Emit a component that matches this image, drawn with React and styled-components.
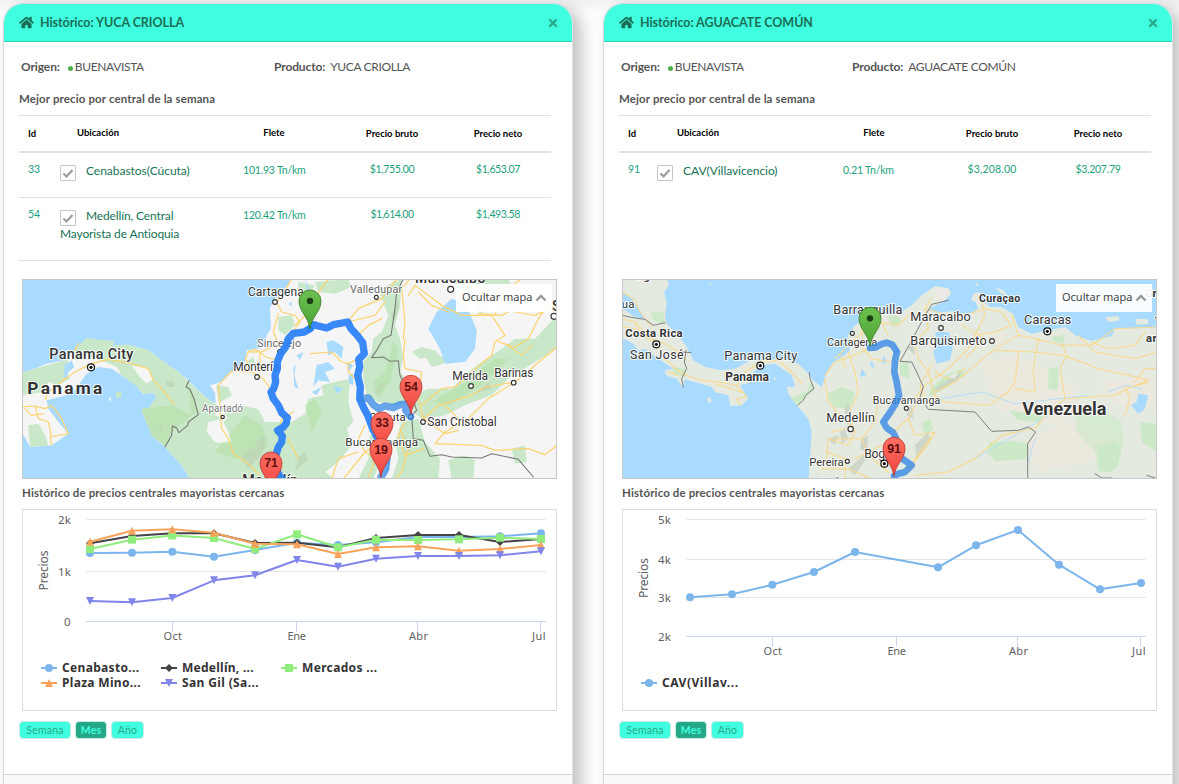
import React from "react";
import styled, { createGlobalStyle, css } from "styled-components";
import { FaHome, FaTimes } from "react-icons/fa";

const Global = createGlobalStyle`
  * { box-sizing: border-box; }
  html, body { margin: 0; height: 784px; overflow: hidden; background: #fdfdfd; }
  body { font-family: Lato, "Open Sans", sans-serif; color: #555; font-size: 12px; }
`;

const Board = styled.main`
  display: flex;
  gap: 30px;
  height: 784px;
  padding: 3px 0 0 3px;
  overflow: hidden;
  background: linear-gradient(#f0f0f0, #fdfdfd 12px);
`;

const Card = styled.section`
  flex: none;
  width: 570px;
  height: 820px;
  border: 1px solid #d8dadb;
  border-right-color: #e0e0e0;
  border-radius: 20px 20px 0 0;
  background: #fff;
  box-shadow: 8px 5px 16px rgba(0, 0, 0, 0.24);
`;

const CardHeader = styled.header`
  display: flex;
  align-items: center;
  height: 38px;
  padding: 0 13px 0 15px;
  border-bottom: 1px solid #33d6b5;
  border-radius: 19px 19px 0 0;
  background: #40ffe0;
  color: #1b6e55;
`;

const Title = styled.h1`
  flex: 1;
  margin: 0 0 0 6px;
  font-size: 12.5px;
  line-height: 18px;
  font-weight: 700;
  letter-spacing: -0.06px;
`;

const Close = styled.button`
  display: flex;
  padding: 0;
  border: 0;
  background: none;
  color: #2aa98b;
`;

const Body = styled.div`
  height: 732px;
  padding: 16px 15px 0;
`;

const InfoRow = styled.div`
  display: grid;
  grid-template-columns: ${(p) => p.$first}px 1fr;
  padding-left: 2px;
  line-height: 18px;
`;

const Info = styled.div`
  display: flex;
  align-items: center;
  letter-spacing: -0.35px;
  white-space: nowrap;
  b { margin-right: ${(p) => p.$gap}px; letter-spacing: -0.12px; }
`;

const Dot = styled.i`
  width: 5px;
  height: 5px;
  margin: 3px 2px 0 0;
  border-radius: 50%;
  background: #4cb04c;
`;

const Heading = styled.h2`
  margin: ${(p) => p.$m};
  font-size: 11.5px;
  line-height: 18px;
  font-weight: 700;
  letter-spacing: 0.12px;
`;

const Table = styled.div`
  width: 532px;
  height: 164px;
  border-top: 1px solid #dee2e6;
`;

const columns = css`
  display: grid;
  grid-template-columns: 41px 155px 118px 118px 94px;
`;

const HeadRow = styled.div`
  ${columns}
  height: 37px;
  line-height: 35px;
  border-bottom: 2px solid #dee2e6;
  color: #000;
  font-size: 9.5px;
  font-weight: 700;
`;

const Row = styled.div`
  ${columns}
  padding: 9px 0 17px;
  border-bottom: ${(p) => (p.$last ? "0" : "1px solid #dee2e6")};
  color: #1aa17e;
  font-size: 10.5px;
  line-height: 15px;
`;

const Cell = styled.div`
  padding-left: ${(p) => p.$pad || 0}px;
  text-align: ${(p) => (p.$center ? "center" : "left")};
  letter-spacing: ${(p) => p.$track || 0}px;
`;

const RaisedHead = styled(Cell)`
  line-height: 33px;
`;

const Freight = styled(Cell)`
  line-height: 17px;
`;

const Place = styled.div`
  margin-left: ${(p) => (p.$shift ? "-3px" : 0)};
  color: #157355;
  font-size: 12px;
  line-height: 18px;
  letter-spacing: ${(p) => p.$track}px;
`;

const Check = styled.span`
  display: inline-flex;
  width: 16px;
  height: 16px;
  margin: 3px 10px -1px 0;
  border: 1px solid #c6c6c6;
  border-radius: 1px;
  vertical-align: top;
  svg { display: block; }
`;

const MapFrame = styled.div`
  position: relative;
  width: 535px;
  height: 200px;
  margin-left: 3px;
  border: 1px solid #c8c8c8;
  overflow: hidden;
  svg.map { display: block; font-family: Roboto, sans-serif; }
`;

const HideMap = styled.button`
  position: absolute;
  top: 4px;
  right: 4px;
  display: flex;
  align-items: center;
  justify-content: space-between;
  width: 96px;
  height: 28px;
  padding: 0 5px 3px 6px;
  border: 0;
  background: rgba(255, 255, 255, 0.93);
  color: #444;
  font: 11px "Noto Sans", sans-serif;
  svg { margin-top: 3px; }
`;

const ChartFrame = styled.div`
  width: 535px;
  height: 202px;
  margin-left: 3px;
  border: 1px solid #dcdcdc;
  svg { display: block; font-family: "Noto Sans", "Open Sans", sans-serif; }
`;

const Buttons = styled.div`
  display: flex;
  gap: 4px;
  margin-top: 10px;
`;

const Period = styled.button`
  width: ${(p) => p.$w}px;
  height: 18px;
  padding: 0 0 1px;
  border: 1px solid #c9ece4;
  border-radius: 4px;
  background: ${(p) => (p.$on ? "#25a888" : "#40ffe0")};
  color: ${(p) => (p.$on ? "#40ffe0" : "#25a888")};
  font: ${(p) => (p.$on ? 700 : 400)} 10.5px Lato, sans-serif;
  letter-spacing: 0.2px;
`;

const Footer = styled.footer`
  height: 48px;
  border-top: 1px solid #d0d2d2;
  background: #f8f9f9;
`;

/* ---------- map pieces ---------- */

const Label = ({ x, y, w, s = 34, b = 400, c = "#333", children }) => (
  <text
    x={x} y={y} fontSize={s} fontWeight={b} fill={c} textLength={w}
    stroke="#fff" strokeWidth="6" strokeOpacity=".85" strokeLinejoin="round" paintOrder="stroke"
  >{children}</text>
);

const City = ({ x, y, r = 7 }) => (
  <circle cx={x} cy={y} r={r} fill="#fff" stroke="#333" strokeWidth="3.4" />
);

const Capital = ({ x, y }) => (
  <g transform={`translate(${x} ${y})`}>
    <circle r="10.5" fill="#fff" stroke="#111" strokeWidth="3.5" />
    <circle r="4.8" fill="#111" />
  </g>
);

const Pin = ({ x, y, n }) => (
  <g transform={`translate(${x} ${y})`}>
    <path
      d="M0 84C-5 46-33 32-33 0A33 33 0 0 1 33 0C33 32 5 46 0 84Z"
      fill={n ? "url(#pinRed)" : "url(#pinGreen)"} stroke={n ? "#b93a35" : "#3c7a2c"} strokeWidth="2.5"
    />
    {n ? (
      <text
        y="13" textAnchor="middle" fontSize="37" fontWeight="700" fill="#5c0f0f"
        fontFamily="Liberation Sans, sans-serif"
      >{n}</text>
    ) : (
      <circle r="9.5" fill="#1d3d14" />
    )}
  </g>
);

const PinDefs = () => (
  <defs>
    <linearGradient id="pinRed" x1="0" y1="0" x2="0" y2="1">
      <stop offset="0" stopColor="#ff6f63" /><stop offset="1" stopColor="#ee443c" />
    </linearGradient>
    <linearGradient id="pinGreen" x1="0" y1="0" x2="0" y2="1">
      <stop offset="0" stopColor="#6cc04f" /><stop offset="1" stopColor="#4ba535" />
    </linearGradient>
  </defs>
);

const line = { fill: "none", strokeLinejoin: "round", strokeLinecap: "round" };

const MapNorth = () => (
  <svg className="map" width="533" height="198" viewBox="24 24 1599 594">
    <PinDefs />
    <rect width="1700" height="700" fill="#a9daff" />
    <path fill="#f5f5f5" d="M0 308L60 290 95 275 160 262 175 235 200 215 215 198 250 205 300 208 290 220 340 218 400 235 440 265 490 300 520 325 560 365 590 390 602 392 600 362 585 340 620 330 650 300 690 270 695 235 735 228 750 210 755 190 768 170 765 110 775 85 800 60 820 35 835 0H1700V700H560L525 621 500 580 450 525 410 490 378 410 400 410 425 375 415 362 385 365 362 340 320 310 290 290 250 285 215 305 190 340 170 365 120 378 95 385 100 410 130 450 160 485 110 520 45 525 21 480 0 470Z" />
    <g fill="#c8e8c9">
      <path d="M0 308L60 290 160 262 152 300 165 320 130 340 100 330 85 360 0 372Z" />
      <path d="M175 235L215 198 300 208 290 220 340 218 400 235 440 265 490 300 560 365 590 390 612 400 600 430 625 440 580 450 575 480 600 510 650 515 640 480 625 450 655 420 690 402 730 412 750 450 830 450 835 640H555L525 621 500 580 450 525 410 490 378 410 400 410 425 375 415 362 385 365 362 340 320 310 305 285 250 262 215 250 180 262Z" />
      <path d="M40 460L70 455 90 490 100 520 45 525Z M303 360L318 358 320 376 305 378Z M603 340L640 345 650 370 612 392Z M615 405L650 400 658 420 640 440Z" />
      <path d="M790 135L830 130 840 160 810 190 790 175Z M850 30L900 40 890 60 850 70Z M700 265L715 255 722 280 700 290Z" />
      <path d="M1095 65L1115 40 1160 21 1155 100 1140 160 1155 200 1165 260 1155 300 1180 330 1190 390 1140 400 1090 390 1055 370 1045 320 1045 270 1070 240 1075 200 1100 180 1120 130Z" />
      <path d="M920 340L960 330 1005 320 1000 390 1015 450 995 470 1010 520 970 570 930 600 960 621H835L830 450 870 425 880 380 925 370Z" />
      <path d="M1200 370L1240 350 1310 350 1360 300 1400 270 1460 230 1500 200 1560 200 1626 130V230L1560 270 1480 320 1430 370 1360 395 1290 430 1220 440 1195 420Z" />
      <path d="M1160 450L1210 440 1230 510 1275 560 1270 621 1130 621 1150 560 1140 510Z M1065 490L1100 470 1110 540 1075 621H1030L1060 560Z" />
      <path d="M1190 240L1220 225 1265 238 1250 255 1215 260Z M1230 250L1260 240 1290 260 1285 275 1250 285Z M1310 21H1480L1500 60 1470 110 1440 70 1360 60 1330 48Z M1380 95L1410 90 1425 110 1395 125Z M1300 565L1350 550 1380 565 1375 621H1310Z M1490 530L1530 520 1535 570 1500 575Z M900 30L1000 21 1010 45 960 65 910 60Z" />
    </g>
    <g fill="#b9e2ad" opacity=".75">
      <path d="M380 410L470 400 530 430 500 455 470 480 450 520 410 490Z M600 540L640 490 690 430 740 460 760 520 720 560 660 560Z M520 345L550 420 530 430Z" />
      <path d="M1075 330L1110 300 1135 210 1150 230 1125 330 1090 380Z M870 400L900 380 920 420 890 480Z M1250 390L1350 330 1440 260 1480 260 1400 340 1300 400Z" />
    </g>
    <path fill="#bcd3b5" opacity=".7" d="M680 560L700 530 715 535 735 495 755 500 740 550 700 590Z M850 555L870 540 880 560 840 600Z M1130 130L1150 80 1153 110 1135 150Z M1075 360L1110 330 1090 365Z M1160 520L1175 500 1185 540Z M1380 365L1420 330 1430 350Z M450 330L470 325 480 345 460 345Z M430 460L445 455 440 480Z" />
    <g fill="#a9daff">
      <path d="M1310 80L1340 90 1365 125 1385 175 1380 230 1350 270 1290 275 1275 230 1240 170 1265 120Z" />
      <path d="M835 290L843 275 838 310 850 350 838 345Z M845 250L865 240 855 265Z M935 210L955 205 985 225 980 260 960 240 940 250Z M905 280L940 270 960 290 930 300 945 330 910 325 895 345Z M955 340L985 350 965 365Z M1000 310L1015 305 1015 340 1003 335Z M890 360L920 345 905 370Z M995 270L1015 280 1000 300Z M820 95L832 90 828 102Z M148 280L170 265 178 285 160 300 155 320 148 315Z M870 20L885 60 875 50Z M1110 621L1125 540 1120 600Z" />
    </g>
    <path fill="#f5f5f5" d="M282 378L288 375 287 390 283 386Z M580 455L615 450 640 480 648 508 605 512 590 490Z M350 280L400 290 415 320 395 335 375 315Z" />
    <g {...line} stroke="#fcd471" strokeWidth="3.7">
      <path d="M21 405L60 402 90 410 110 400 140 440 160 485 105 495 110 517M60 402L70 440 100 450 110 495M30 410L50 430 85 425M92 382L95 365 150 320 180 300 228 275 280 262 350 275 400 290 415 325 440 350 478 398M180 235L190 215" />
      <path d="M830 21L805 65 785 90 800 120 840 130 855 150 790 240M790 125L775 180 790 215 740 240 700 240 692 260 710 300 650 297 610 340 612 370 620 470 640 500 655 545 700 575 735 610M710 300L745 320 765 350M735 240V300M700 240Q720 225 740 245T790 260M840 160Q880 130 905 70L940 21M860 60L885 110 880 160" />
      <path d="M885 245L950 240 980 270 1000 275 1030 260M1000 275V300L1030 330M998 150L1030 110 1100 80 1145 21M1000 150L1080 130 1110 90M1020 200L1060 160 1100 140M1170 200L1165 250 1170 290 1220 300 1210 380 1225 440 1290 485 1330 475M1185 21L1160 50 1170 150 1165 200M1220 400L1280 350 1320 345 1370 300 1430 250 1440 210 1470 190 1430 130 1340 130 1280 100 1200 40 1180 70M1225 440L1270 400 1370 370 1410 345 1500 330 1560 280 1626 225M1500 330L1420 380 1360 440 1290 480 1260 515 1400 520 1440 535 1540 530 1590 548 1626 520M1450 210L1500 225 1540 200 1570 140 1600 100M1470 215L1520 250 1550 220" />
      <path d="M1170 450L1150 490 1170 550 1225 530M1100 510L1050 540 1030 500 1050 460M1050 540L985 621M1050 540L1080 560 1060 621M1155 470L1180 530 1160 600 1140 621M1440 130L1460 60 1520 21M1300 120L1250 100 1210 60M1390 125L1460 130 1520 100M1500 120L1560 130 1626 100M1290 400L1330 440 1370 455M950 621L970 560 1030 540" />
      <path d="M835 420L800 440 790 480M820 500L850 560M740 560L780 621" />
    </g>
    <g {...line} stroke="#777" strokeWidth="3.2">
      <path d="M522 326L513 345 525 352 537 380 550 428 520 450 518 460 492 482 485 468 472 462 470 490 450 525" />
      <path d="M1165 21L1145 60 1140 110 1128 190 1105 200 1085 235 1070 257 1105 255 1125 268 1150 266 1155 310 1175 350 1195 385 1205 415 1190 430 1195 500 1225 505 1245 553 1280 548 1310 555 1400 558 1430 545 1510 562 1555 615" />
    </g>
    <Label x={699} y={72} w={167} s={36}>Cartagena</Label><City x={780} y={90} />
    <Label x={1005} y={62} w={156} s={32} c="#666">Valledupar</Label><City x={1084} y={76} r={6} />
    <Label x={1200} y={34} w={211} s={42} b={500}>Maracaibo</Label><City x={1307} y={52} r={9} />
    <Label x={727} y={224} w={131} s={32} c="#666">Sincelejo</Label><City x={794} y={239} r={6} />
    <Label x={655} y={297} w={138} s={36}>Montería</Label><City x={726} y={315} />
    <Label x={103} y={260} w={252} s={43} b={500}>Panama City</Label><Capital x={228} y={286} />
    <Label x={37} y={367} w={225} s={52} b={700}>Panama</Label>
    <Label x={561} y={419} w={123} s={30} c="#777">Apartadó</Label><City x={623} y={435} r={5} />
    <Label x={682} y={638} w={168} s={43} b={500}>Medellín</Label>
    <Label x={1063} y={447} w={109}>Cúcuta</Label><City x={1187} y={434} />
    <Label x={1237} y={461} w={208} s={36}>San Cristobal</Label><City x={1224} y={450} />
    <Label x={991} y={521} w={218} s={35}>Bucaramanga</Label>
    <Label x={1312} y={323} w={107} s={36}>Merida</Label><City x={1368} y={342} />
    <Label x={1438} y={315} w={117} s={36}>Barinas</Label><City x={1496} y={332} />
    <Label x={1611} y={116} w={28} s={42} b={500}>S</Label><City x={1617} y={133} r={9} />
    <g {...line} stroke="#2c82f6" strokeWidth="22">
      <path opacity=".94" d="M885 170L868 180 835 184 820 200 812 225 797 245 787 270 787 290 780 310 782 330 776 350 768 360 775 380 790 400 800 422 817 437 813 455 805 465 788 475 802 492 800 510 790 525 784 545 770 570 800 621" />
      <path opacity=".94" d="M885 170L895 158 910 162 935 168 955 158 998 150 1008 170 1025 188 1043 212 1048 245 1031 262 1034 285 1028 310 1036 345 1034 380 1045 405 1058 430 1073 470 1097 515" />
      <path opacity=".75" stroke="#3788e6" d="M1042 380L1060 378 1075 398 1092 410 1110 402 1135 407 1155 398 1176 396 1172 415 1187 434M1097 515L1116 560 1112 590 1098 615" />
    </g>
    <Pin x={885} y={87} /><Pin x={1188} y={343} n="54" /><Pin x={1101} y={453} n="33" />
    <Pin x={1098} y={532} n="19" /><Pin x={768} y={573} n="71" />
  </svg>
);

const MapWide = () => (
  <svg className="map" width="533" height="198" viewBox="24 24 1599 594">
    <rect width="1700" height="700" fill="#a9daff" />
    <g fill="#e4eadf">
      <path d="M0 0H150L162 40 148 60 155 95 150 130 155 155 190 190 215 225 235 265 270 285 320 295 360 290 400 268 460 262 510 260 550 275 575 300 600 330 620 345 632 310 650 275 680 255 705 235 698 190 720 160 770 130 850 125 890 100 920 70 960 42 1000 48 1009 65 985 90 950 105 940 115 965 122 1010 118 1060 128 1090 110 1082 90 1068 85 1075 65 1095 60 1105 85 1125 105 1160 105 1195 125 1210 165 1250 185 1350 165 1380 190 1430 207 1490 192 1500 170 1700 165V700H575L585 560 590 480 580 440 545 400 520 365 515 345 540 345 530 310 480 275 440 280 415 300 410 330 375 340 400 380 380 400 345 402 340 370 300 360 290 345 210 322 203 345 185 320 152 310 150 295 175 290 130 260 90 230 70 235 55 215 0 185Z" />
      <path d="M276 380L286 376 290 390 280 392Z M1080 30L1092 38 1084 42Z M1140 45L1165 55 1180 75 1160 65Z M1470 135L1510 132 1515 145 1480 150Z M1560 140L1600 142V156L1565 158Z M474 318L482 316 482 328Z M284 30H288V38H284Z" />
    </g>
    <g fill="#ece8dc" opacity=".8">
      <path d="M1100 270L1200 250 1330 310 1390 360 1350 460 1250 450 1130 400Z M1450 330L1626 310V420L1500 400Z M1240 500L1380 440 1500 480 1480 560 1260 600Z M960 55L1000 50 1000 70 960 90Z M1080 180L1180 180 1150 230Z" />
    </g>
    <g fill="#cbe9c6">
      <path d="M108 118L145 122 150 158 115 145Z M525 378L580 355 585 328 600 350 570 375 550 400Z M636 365L680 345 718 360 712 395 690 410 655 405Z M817 135L845 130 862 150 835 165Z M170 285L212 290 210 315 180 305Z M1300 290L1330 285 1328 355 1300 350Z M1122 510L1200 507 1240 515 1235 560 1140 568 1118 545Z M1450 520L1500 510 1520 530 1510 580 1485 600 1450 595Z M1576 450L1626 455V540L1580 510Z M1180 415L1285 430 1280 450 1210 445Z M920 455L945 440 955 470 930 490Z M948 350L990 310 1040 290 1050 310 990 350 940 375Z M855 275L880 265 882 320 855 310Z M1310 195L1350 190 1345 213 1318 210Z" />
      <path opacity=".6" d="M1380 420L1460 410 1520 450 1525 520 1490 600 1450 600 1440 540 1385 480Z" />
    </g>
    <path fill="#c7cfc2" opacity=".75" d="M690 400L705 395 700 440 690 430Z M675 480L690 470 700 500 680 515Z M740 500L760 490 755 540 735 530Z M700 590L750 545 760 550 720 610Z M900 520L940 480 945 510 905 560Z M875 430L890 395 895 440Z M640 500L670 490 660 520Z M960 350L1040 295 1030 320 970 360Z M880 230L895 200 900 250Z" />
    <g fill="#a9daff">
      <path d="M960 180L1000 180 1015 215 1005 265 965 275 955 240 965 215Z" />
      <path d="M24 60L50 80 75 115 90 140 60 135 24 110Z M1570 365L1600 370 1590 410 1570 425 1548 400 1565 390Z M840 210L850 240 838 250Z M805 250L815 270 800 275Z M740 290L755 310 735 315Z M770 265L780 290 765 280Z" />
    </g>
    <g {...line} stroke="#a9daff" strokeWidth="2.5">
      <path d="M978 380L1100 360 1200 395 1330 380 1420 370M1350 380L1300 430 1200 490 1080 560M1480 360L1530 340 1580 350M880 440L900 400M1260 500L1240 570" />
    </g>
    <g {...line} stroke="#fbd88b" strokeWidth="3.1">
      <path d="M21 60L55 80 75 120 110 165M21 140L60 150 110 200 150 215 190 240 215 265M60 150L80 190 124 217 150 260 200 305 260 325 310 330 365 340 395 375 365 380 375 398M300 335L380 360M365 340L390 300 436 270 490 265 530 300 560 335M160 300L190 310M21 165L60 170 80 190" />
      <path d="M630 310L660 270 720 250 760 230M628 320L640 390 670 425 707 460M660 260L720 200 790 150 850 160 890 120M740 170L745 230 770 260 825 270M700 240L720 300 730 360 700 430 720 480 700 520 640 500 635 540 690 560 690 621M660 500L740 500 780 450 790 380M800 150L820 190M640 540L620 590 700 590 770 621M740 500L760 550 820 600M720 560L800 520M690 470L650 480M680 250L690 290M835 480L880 440 900 400 960 375 940 300 910 260 900 210 940 170 930 110 950 80" />
      <path d="M930 110L1000 130 1060 125 1110 110 1160 120 1190 160 1140 180 1080 190 1060 230 1000 290 930 340 900 380M1190 130L1210 190 1260 200 1340 220 1430 220 1500 170 1626 165M1210 190L1140 230 1080 280 1020 330 960 360M1140 235L1260 240 1340 250 1400 270 1450 290 1540 310 1600 325 1550 345 1500 370M1210 240L1200 330 1180 360 1120 400 990 390 960 370M1270 200L1255 290 1260 360 1200 350M1355 250L1335 290 1350 380 1300 420 1260 470M1255 470L1160 490 1080 560 1000 600 900 610M1500 370L1420 375 1350 380M1560 330L1590 290 1626 290M1530 340L1545 380 1530 430M1550 345L1600 330M1390 190L1440 240 1560 260 1626 240M880 600L900 560 960 480 900 490 880 440M960 480L930 530 880 590M1080 190L1110 130 1100 90M1040 160L1110 200 1050 260M960 300L1000 320 1050 290M950 280L915 340 930 380M1430 210L1480 230 1560 220 1590 180M1340 215L1360 260" />
    </g>
    <path fill="#ece9e8" d="M960 48L1000 52 985 85 970 75Z M1000 315L1030 300 1020 320Z M1530 430L1545 425 1535 442Z" />
    <g {...line} stroke="#777" strokeWidth="2.8">
      <path d="M21 130L60 138 90 142 115 160 150 152M200 240L228 242M213 235L208 270 215 290 200 320 205 345M583 302L585 320 597 350 572 370 565 385 548 400" />
      <path d="M1000 85L950 97 920 150 885 215 855 268 890 270 905 300 925 345 915 375 940 412 1080 420 1130 478 1210 475 1240 465 1262 480 1238 515 1238 621M1440 605L1460 618H1490M1595 610L1626 620" />
    </g>
    <Label x={62} y={25} w={42} b={500}>og</Label>
    <Label x={20} y={109} w={38}>ua</Label>
    <Label x={31} y={195} w={172} b={700}>Costa Rica</Label><Capital x={124} y={217} />
    <Label x={45} y={262} w={161} s={37}>San José</Label>
    <Label x={328} y={263} w={219} s={38}>Panama City</Label><Capital x={436} y={281} />
    <Label x={331} y={327} w={131} s={36} b={700}>Panama</Label>
    <Label x={655} y={125} w={207} s={38}>Barranquilla</Label>
    <Label x={636} y={221} w={151} s={33}>Cartagena</Label><City x={712} y={184} r={6} />
    <Label x={773} y={396} w={203} s={32}>Bucaramanga</Label><City x={874} y={409} r={6} />
    <Label x={634} y={451} w={146} s={38}>Medellín</Label><City x={707} y={471} r={8} />
    <Label x={583} y={581} w={103} s={34}>Pereira</Label><City x={697} y={568} r={6} />
    <Label x={748} y={557} w={112} s={37}>Bogotá</Label><Capital x={808} y={575} />
    <Label x={613} y={644} w={70} s={38}>Cali</Label>
    <Label x={1092} y={89} w={124} s={32} b={700}>Curaçao</Label>
    <Label x={886} y={147} w={181} s={38}>Maracaibo</Label><City x={978} y={168} r={7} />
    <Label x={886} y={219} w={229} s={38}>Barquisimeto</Label><City x={1131} y={207} r={7} />
    <Label x={1227} y={157} w={142} s={38}>Caracas</Label><Capital x={1297} y={178} />
    <Label x={1222} y={429} w={252} s={54} b={700}>Venezuela</Label>
    <Label x={1593} y={209} w={32} b={700}>ar</Label>
    <Label x={1590} y={75} w={52} b={700}>Gre</Label>
    <Label x={1619} y={158} w={20} b={700}>T</Label>
    <path {...line} stroke="#3788e6" strokeWidth="20" opacity=".8" d="M765 228L782 226 800 216 815 212 832 218 846 240 840 265 838 300 845 330 852 370 842 395 826 420 805 450 815 468 835 482 848 510 845 540 862 560 890 580 870 600 850 605 837 612" />
    <Pin x={765} y={139} /><Pin x={837} y={529} n="91" />
  </svg>
);

/* ---------- chart pieces ---------- */

const XS = [90, 132, 172.3, 214, 255, 297, 338, 376, 418, 459, 500, 541];

const Marker = ({ kind, x, y, color }) => {
  if (kind === "circle") return <circle cx={x} cy={y} r="4" fill={color} />;
  const shapes = {
    diamond: "M0-4L4 0 0 4-4 0Z",
    square: "M-4-4H4V4H-4Z",
    up: "M0-4L4 4H-4Z",
    down: "M-4-4H4L0 4Z",
  };
  return <path d={shapes[kind]} transform={`translate(${x} ${y})`} fill={color} />;
};

const Chart = ({ grid, titleY, series, legend }) => {
  const base = grid[grid.length - 1][1];
  return (
    <svg width="533" height="200" viewBox="23 510 533 200">
      {grid.map(([t, y, w], i) => (
        <g key={t}>
          <path d={`M86 ${y}H546`} stroke={i === grid.length - 1 ? "#ccd6eb" : "#e6e6e6"} />
          <text x={w ? 71 - w : 64} y={Math.round(y + 4.4)} fontSize="11.5" fill="#606060" textLength={w || undefined}>{t}</text>
        </g>
      ))}
      {[["Oct", 172.5, 163.5, 18.5], ["Ene", 296.5, 287.5, 18.5], ["Abr", 417.5, 409, 19], ["Jul", 540.5, 532, 13.5]].map(([t, x, tx, w]) => (
        <g key={t}>
          <path d={`M${x} ${base}v10`} stroke="#ccd6eb" />
          <text x={tx} y={base + 18.5} fontSize="11" fill="#606060" textLength={w}>{t}</text>
        </g>
      ))}
      <text transform={`translate(48 ${titleY}) rotate(-90)`} x="-20" fontSize="12" fill="#606060" textLength="40">Precios</text>
      {series.map((s) => (
        <g key={s.color}>
          <polyline
            points={s.ys.map((y, i) => (y === null ? null : `${XS[i]},${y}`)).filter(Boolean).join(" ")}
            fill="none" stroke={s.color} strokeWidth="2" strokeLinejoin="round"
          />
          {s.ys.map((y, i) => y !== null && <Marker key={i} kind={s.kind} x={XS[i]} y={y} color={s.color} />)}
        </g>
      ))}
      {legend.map(([t, x, y, w], i) => (
        <g key={t}>
          <path d={`M${x} ${y}h16`} stroke={series[i].color} strokeWidth="2" />
          <Marker kind={series[i].kind} x={x + 8} y={y} color={series[i].color} />
          <text x={x + 21} y={y + 4} fontSize="12" fontWeight="700" fill="#333" textLength={w}>{t}</text>
        </g>
      ))}
    </svg>
  );
};

const yuca = {
  grid: [["2k", 519.5, 13], ["1k", 571.5, 13], ["0", 621.5, 0]],
  titleY: 570.5,
  series: [
    { color: "#7cb5ec", kind: "circle", ys: [553, 552.7, 551.7, 556.7, 550, 542.7, 545, 542.3, 537, 537, 536.3, 533.3] },
    { color: "#434348", kind: "diamond", ys: [543.3, 536, 533.3, 533.3, 543, 542.7, 547.3, 538, 535, 535, 542, 539] },
    { color: "#90ed7d", kind: "square", ys: [549, 539.7, 535.5, 538, 549, 534.3, 547.3, 539.7, 540, 539.3, 537.7, 539] },
    { color: "#f7a35c", kind: "up", ys: [541.7, 530.7, 529.3, 532.7, 543.7, 544.3, 554, 547.3, 546.3, 550.7, 549, 545] },
    { color: "#8085e9", kind: "down", ys: [601, 602.3, 598, 580.3, 575.3, 560, 566.7, 558.7, 556, 556, 555.3, 551.3] },
  ],
  legend: [
    ["Cenabasto...", 41, 668, 77],
    ["Medellín, ...", 161, 668, 71.5],
    ["Mercados ...", 281, 668, 75],
    ["Plaza Mino...", 41, 683, 78.5],
    ["San Gil (Sa...", 161, 683, 76.5],
  ],
};

const aguacate = {
  grid: [["5k", 519.5, 13], ["4k", 559.5, 13], ["3k", 597.5, 13], ["2k", 636.5, 13]],
  titleY: 578,
  series: [
    { color: "#7cb5ec", kind: "circle", ys: [597.3, 594.3, 584.7, 572, 552, null, 567.3, 545.3, 530, 564.7, 589.3, 583] },
  ],
  legend: [["CAV(Villav...", 41, 683, 76]],
};

const Panel = ({ name, split, shift, rows, map, chart }) => (
  <Card>
    <CardHeader>
      <FaHome size={15} />
      <Title>Histórico: {name}</Title>
      <Close><FaTimes size={12} /></Close>
    </CardHeader>
    <Body>
      <InfoRow $first={split}>
        <Info $gap={8}><b>Origen:</b><Dot />BUENAVISTA</Info>
        <Info $gap={5}><b>Producto:</b>{name}</Info>
      </InfoRow>
      <Heading $m="14px 0 7px">Mejor precio por central de la semana</Heading>
      <Table>
        <HeadRow>
          <Cell $pad={9}>Id</Cell><RaisedHead $pad={17}>Ubicación</RaisedHead><RaisedHead $center>Flete</RaisedHead>
          <Cell $center>Precio bruto</Cell><Cell $center>Precio neto</Cell>
        </HeadRow>
        {rows.map((r) => (
          <Row key={r.id} $last={shift}>
            <Cell $pad={9}>{r.id}</Cell>
            <Place $shift={shift} $track={r.placeTrack}>
              <Check>
                <svg width="14" height="14" viewBox="0 0 14 14">
                  <path d="M2.5 7.5L5.5 10.5 11.5 4" fill="none" stroke="#9c9c9c" strokeWidth="2.2" />
                </svg>
              </Check>
              {r.place}
            </Place>
            <Freight $pad={28} $track={-0.2}>{r.freight}</Freight>
            <Cell $center $track={r.grossTrack}>{r.gross}</Cell>
            <Cell $center $track={r.netTrack}>{r.net}</Cell>
          </Row>
        ))}
      </Table>
      <MapFrame>
        {map}
        <HideMap>
          Ocultar mapa
          <svg width="12" height="8" viewBox="0 0 12 8">
            <path d="M1.5 6.5L6 2 10.5 6.5" fill="none" stroke="#999" strokeWidth="2.4" />
          </svg>
        </HideMap>
      </MapFrame>
      <Heading $m="5px 0 7px 3px">Histórico de precios centrales mayoristas cercanas</Heading>
      <ChartFrame><Chart {...chart} /></ChartFrame>
      <Buttons>
        <Period $w={52}>Semana</Period><Period $w={32} $on>Mes</Period><Period $w={33}>Año</Period>
      </Buttons>
    </Body>
    <Footer />
  </Card>
);

export default function App() {
  return (
    <>
      <Global />
      <Board>
        <Panel
          name="YUCA CRIOLLA" split={253} map={<MapNorth />} chart={yuca}
          rows={[
            {
              id: "33", place: "Cenabastos(Cúcuta)", placeTrack: -0.03, freight: "101.93 Tn/km",
              gross: "$1,755.00", grossTrack: -0.32, net: "$1,653.07", netTrack: -0.38,
            },
            {
              id: "54", place: "Medellín, Central Mayorista de Antioquia", placeTrack: -0.13, freight: "120.42 Tn/km",
              gross: "$1,614.00", grossTrack: -0.5, net: "$1,493.58", netTrack: -0.38,
            },
          ]}
        />
        <Panel
          name="AGUACATE COMÚN" split={231} shift map={<MapWide />} chart={aguacate}
          rows={[{
            id: "91", place: "CAV(Villavicencio)", placeTrack: -0.05, freight: "0.21 Tn/km",
            gross: "$3,208.00", grossTrack: 0.15, net: "$3,207.79", netTrack: -0.25,
          }]}
        />
      </Board>
    </>
  );
}
